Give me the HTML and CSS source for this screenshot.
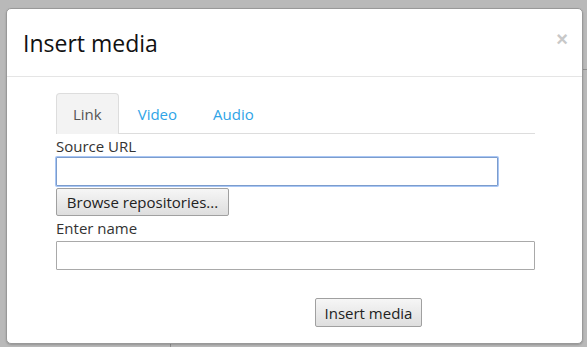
FILE: index.html
```html
<!DOCTYPE html>
<html>
<head>
<meta charset="utf-8">
<link rel="stylesheet" href="styles.css">
</head>
<body>
<div class="backdrop">
  <div class="bg-line-v"></div>
  <div class="bg-line-h"></div>
  <div class="dialog">
    <div class="header">
      <h3 class="title">Insert media</h3>
      <span class="close">&times;</span>
    </div>
    <div class="body">
      <div class="tabs">
        <span class="tab active">Link</span>
        <span class="tab">Video</span>
        <span class="tab">Audio</span>
      </div>
      <label class="label">Source URL</label>
      <input class="input url" type="text">
      <button class="btn browse">Browse repositories...</button>
      <label class="label name-label">Enter name</label>
      <input class="input name" type="text">
      <div class="actions">
        <button class="btn insert">Insert media</button>
      </div>
    </div>
  </div>
</div>
</body>
</html>
```
FILE: styles.css
```css
html, body {
  margin: 0;
  padding: 0;
}
body {
  width: 587px;
  height: 347px;
  overflow: hidden;
  background: #b9b9b9;
  font-family: "Open Sans", "DejaVu Sans", sans-serif;
}
.backdrop {
  position: relative;
  width: 587px;
  height: 347px;
  padding: 8px 0 0 6px;
  box-sizing: border-box;
}
.bg-line-v {
  position: absolute;
  left: 170px;
  top: 330px;
  width: 1px;
  height: 17px;
  background: #8f8f8f;
}
.bg-line-h {
  position: absolute;
  left: 580px;
  top: 69px;
  width: 7px;
  height: 1px;
  background: #8f8f8f;
}
.dialog {
  position: relative;
  width: 577px;
  height: 336px;
  box-sizing: border-box;
  background: #fff;
  border: 1px solid #999;
  border-radius: 5px;
  box-shadow: 0 1px 2px rgba(0,0,0,0.2);
}
.header {
  height: 67px;
  border-bottom: 1px solid #e5e5e5;
  display: flex;
  align-items: center;
  justify-content: space-between;
  padding: 0 16px;
}
.title {
  margin: 0;
  font-size: 23px;
  font-weight: 400;
  color: #111;
  line-height: 30px;
}
.close {
  font-size: 20px;
  font-weight: 700;
  color: #c8c8c8;
  line-height: 1;
  margin-right: -2px;
  margin-top: -8px;
  font-family: "Liberation Sans", sans-serif;
}
.body {
  padding: 16px 0 0 49px;
  width: 479px;
  display: flex;
  flex-direction: column;
  align-items: flex-start;
}
.tabs {
  display: flex;
  width: 479px;
  height: 40px;
  border-bottom: 1px solid #ddd;
}
.tab {
  box-sizing: border-box;
  height: 41px;
  padding: 0 16px;
  margin-right: 2px;
  line-height: 40px;
  font-size: 15px;
  color: #2fa4e7;
  border: 1px solid transparent;
  border-bottom: none;
  border-radius: 4px 4px 0 0;
}
.tab.active {
  background: #f3f3f3;
  border-color: #ddd;
  color: #555;
}
.label {
  font-size: 15px;
  color: #333;
  line-height: 22px;
  margin-top: 1px;
}
.input {
  box-sizing: border-box;
  height: 29px;
  margin: 0;
  background: #fff;
  border: 1px solid #a9a9a9;
  border-radius: 1px;
  outline: none;
}
.input.url {
  width: 442px;
  border: 1px solid #7c9ccc;
  box-shadow: 0 0 0 1px #a8c6f5;
}
.input.name {
  width: 479px;
  margin-top: 2px;
}
.btn {
  box-sizing: border-box;
  height: 28px;
  padding: 0 7px;
  font-family: "Open Sans", "DejaVu Sans", sans-serif;
  font-size: 15px;
  color: #222;
  background: linear-gradient(#f6f6f6, #dedede);
  border: 1px solid #a0a0a0;
  border-radius: 2px;
  white-space: nowrap;
}
.browse {
  margin-top: 2px;
  width: 173px;
}
.name-label {
  margin-top: 1px;
}
.actions {
  padding-left: 259px;
  margin-top: 28px;
}
.insert {
  width: 107px;
  height: 29px;
}
```
